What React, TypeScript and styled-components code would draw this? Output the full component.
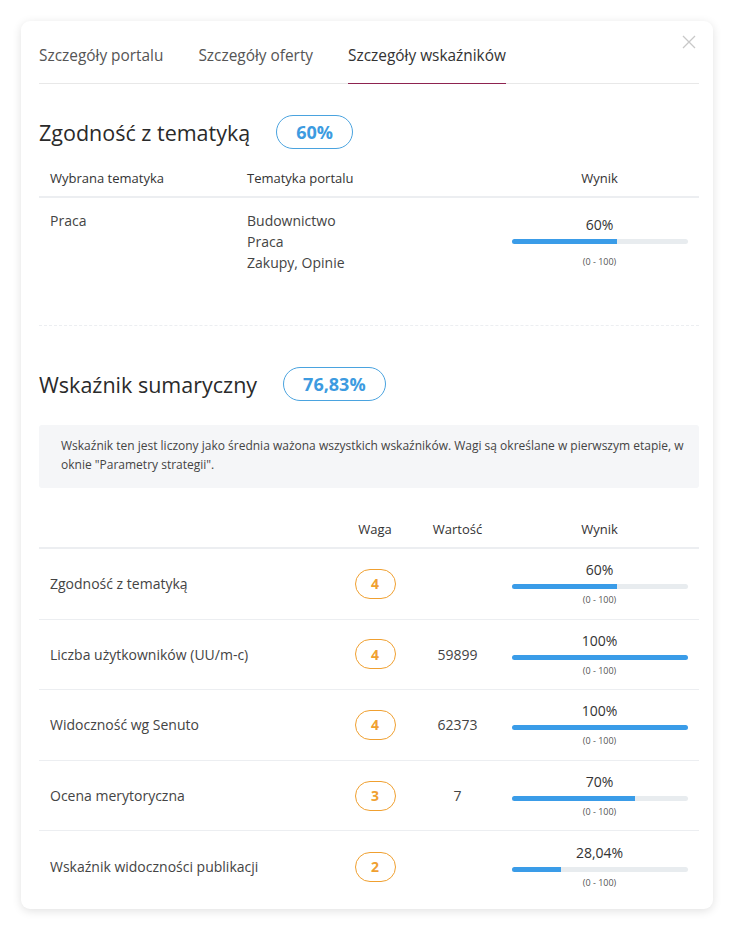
import React from "react";
import styled, { createGlobalStyle } from "styled-components";

const GlobalStyle = createGlobalStyle`
    body {
        margin: 0;
        background: #fff;
        font-family: "Open Sans", "Noto Sans", sans-serif;
        color: #333;
    }
`;

const Page = styled.div`
    padding: 21px 21px 23px 21px;
`;

const Card = styled.div`
    position: relative;
    width: 692px;
    box-sizing: border-box;
    padding: 0 14px 7px 18px;
    background: #fff;
    border-radius: 9px;
    box-shadow: 0 2px 10px rgba(0, 0, 0, 0.12);
`;

const CloseButton = styled.button`
    position: absolute;
    top: 13px;
    right: 15px;
    width: 18px;
    height: 18px;
    padding: 0;
    border: none;
    background: none;
    cursor: pointer;
`;

const Tabs = styled.div`
    display: flex;
    gap: 35px;
    border-bottom: 1px solid #e8e8e8;
    padding-top: 24px;
`;

const Tab = styled.div<{ $active?: boolean }>`
    font-size: 15.4px;
    line-height: 22px;
    padding-bottom: 16px;
    margin-bottom: -1px;
    color: ${(p) => (p.$active ? "#333" : "#555")};
    border-bottom: 1px solid ${(p) => (p.$active ? "#8e2350" : "transparent")};
`;

const Section = styled.section<{ $top: number }>`
    margin-top: ${(p) => p.$top}px;
`;

const SectionHeader = styled.div`
    display: flex;
    align-items: center;
    gap: 26px;
`;

const Title = styled.h2`
    margin: 0;
    font-size: 21.5px;
    font-weight: 400;
    color: #2a2a2a;
`;

const ScoreBadge = styled.div`
    height: 34px;
    box-sizing: border-box;
    padding: 0 19px;
    border: 1px solid #4aa3df;
    border-radius: 17px;
    display: flex;
    align-items: center;
    font-size: 18px;
    font-weight: 700;
    color: #3d9be0;
`;

const Table = styled.div<{ $cols: string; $top: number }>`
    display: grid;
    grid-template-columns: ${(p) => p.$cols};
    margin-top: ${(p) => p.$top}px;
`;

const HeadCell = styled.div<{ $center?: boolean; $height: number }>`
    height: ${(p) => p.$height}px;
    display: flex;
    align-items: center;
    justify-content: ${(p) => (p.$center ? "center" : "flex-start")};
    padding-left: ${(p) => (p.$center ? 0 : 11)}px;
    padding-top: 2px;
    box-sizing: border-box;
    font-size: 13px;
    color: #333;
    border-bottom: 2px solid #eceef1;
`;

const TopicCell = styled.div`
    padding: 12px 0 0 11px;
    font-size: 14px;
    line-height: 21px;
    color: #444;
`;

const Row = styled.div`
    display: contents;
    &:not(:last-child) > * {
        border-bottom: 1px solid #eceef1;
    }
`;

const Cell = styled.div<{ $center?: boolean }>`
    height: 70.6px;
    box-sizing: border-box;
    display: flex;
    align-items: center;
    justify-content: ${(p) => (p.$center ? "center" : "flex-start")};
    padding-left: ${(p) => (p.$center ? 0 : 11)}px;
    font-size: 14px;
    color: #444;
`;

const ResultBox = styled.div<{ $gap: number }>`
    display: flex;
    flex-direction: column;
    align-items: center;
    width: 176px;
    margin: 0 auto;

    & > small {
        margin-top: ${(p) => p.$gap}px;
    }
`;

const Percent = styled.div`
    font-size: 14px;
    line-height: 18px;
    color: #333;
`;

const Track = styled.div`
    width: 100%;
    height: 5px;
    margin-top: 5px;
    border-radius: 3px;
    background: #e8ecef;
    overflow: hidden;
`;

const Fill = styled.div`
    height: 100%;
    background: #3a9ce8;
`;

const Range = styled.small`
    font-size: 9px;
    line-height: 12px;
    color: #555;
`;

const Divider = styled.div`
    margin-top: 52px;
    border-top: 1px dashed #eceef1;
`;

const InfoBox = styled.div`
    margin-top: 24px;
    padding: 11px 12px 14px 22px;
    background: #f5f6f8;
    border-radius: 3px;
    font-size: 12px;
    line-height: 19px;
    color: #444;
`;

const WeightBadge = styled.div`
    width: 41px;
    height: 30px;
    box-sizing: border-box;
    border: 1px solid #f0a030;
    border-radius: 15px;
    display: flex;
    align-items: center;
    justify-content: center;
    font-size: 14px;
    font-weight: 700;
    color: #f0a030;
`;

function Result({ value, label, gap }: { value: number; label: string; gap: number }) {
    return (
        <ResultBox $gap={gap}>
            <Percent>{label}</Percent>
            <Track>
                <Fill style={{ width: `${value}%` }} />
            </Track>
            <Range>(0 - 100)</Range>
        </ResultBox>
    );
}

const indicators = [
    { name: "Zgodność z tematyką", weight: 4, value: "", score: 60, label: "60%" },
    { name: "Liczba użytkowników (UU/m-c)", weight: 4, value: "59899", score: 100, label: "100%" },
    { name: "Widoczność wg Senuto", weight: 4, value: "62373", score: 100, label: "100%" },
    { name: "Ocena merytoryczna", weight: 3, value: "7", score: 70, label: "70%" },
    { name: "Wskaźnik widoczności publikacji", weight: 2, value: "", score: 28.04, label: "28,04%" },
];

export default function App() {
    return (
        <>
            <GlobalStyle />
            <Page>
                <Card>
                    <CloseButton aria-label="Zamknij">
                        <svg width="14" height="14" viewBox="0 0 14 14">
                            <path d="M1 1 L13 13 M13 1 L1 13" stroke="#c8c8c8" strokeWidth="1.3" />
                        </svg>
                    </CloseButton>
                    <Tabs>
                        <Tab>Szczegóły portalu</Tab>
                        <Tab>Szczegóły oferty</Tab>
                        <Tab $active>Szczegóły wskaźników</Tab>
                    </Tabs>

                    <Section $top={31}>
                        <SectionHeader>
                            <Title>Zgodność z tematyką</Title>
                            <ScoreBadge>60%</ScoreBadge>
                        </SectionHeader>
                        <Table $cols="198px 263px 1fr" $top={8}>
                            <HeadCell $height={41}>Wybrana tematyka</HeadCell>
                            <HeadCell $height={41} style={{ paddingLeft: 10 }}>Tematyka portalu</HeadCell>
                            <HeadCell $height={41} $center>Wynik</HeadCell>
                            <TopicCell>Praca</TopicCell>
                            <TopicCell style={{ paddingLeft: 10 }}>
                                Budownictwo
                                <br />
                                Praca
                                <br />
                                Zakupy, Opinie
                            </TopicCell>
                            <TopicCell style={{ paddingLeft: 0, paddingTop: 18 }}>
                                <Result value={60} label="60%" gap={12} />
                            </TopicCell>
                        </Table>
                        <Divider />
                    </Section>

                    <Section $top={41}>
                        <SectionHeader>
                            <Title>Wskaźnik sumaryczny</Title>
                            <ScoreBadge>76,83%</ScoreBadge>
                        </SectionHeader>
                        <InfoBox>
                            Wskaźnik ten jest liczony jako średnia ważona wszystkich wskaźników. Wagi są określane w
                            pierwszym etapie, w oknie "Parametry strategii".
                        </InfoBox>
                        <Table $cols="296px 80px 85px 1fr" $top={20}>
                            <HeadCell $height={41} />
                            <HeadCell $height={41} $center>Waga</HeadCell>
                            <HeadCell $height={41} $center>Wartość</HeadCell>
                            <HeadCell $height={41} $center>Wynik</HeadCell>
                            {indicators.map((it) => (
                                <Row key={it.name}>
                                    <Cell>{it.name}</Cell>
                                    <Cell $center>
                                        <WeightBadge>{it.weight}</WeightBadge>
                                    </Cell>
                                    <Cell $center>{it.value}</Cell>
                                    <Cell $center>
                                        <Result value={it.score} label={it.label} gap={5} />
                                    </Cell>
                                </Row>
                            ))}
                        </Table>
                    </Section>
                </Card>
            </Page>
        </>
    );
}
